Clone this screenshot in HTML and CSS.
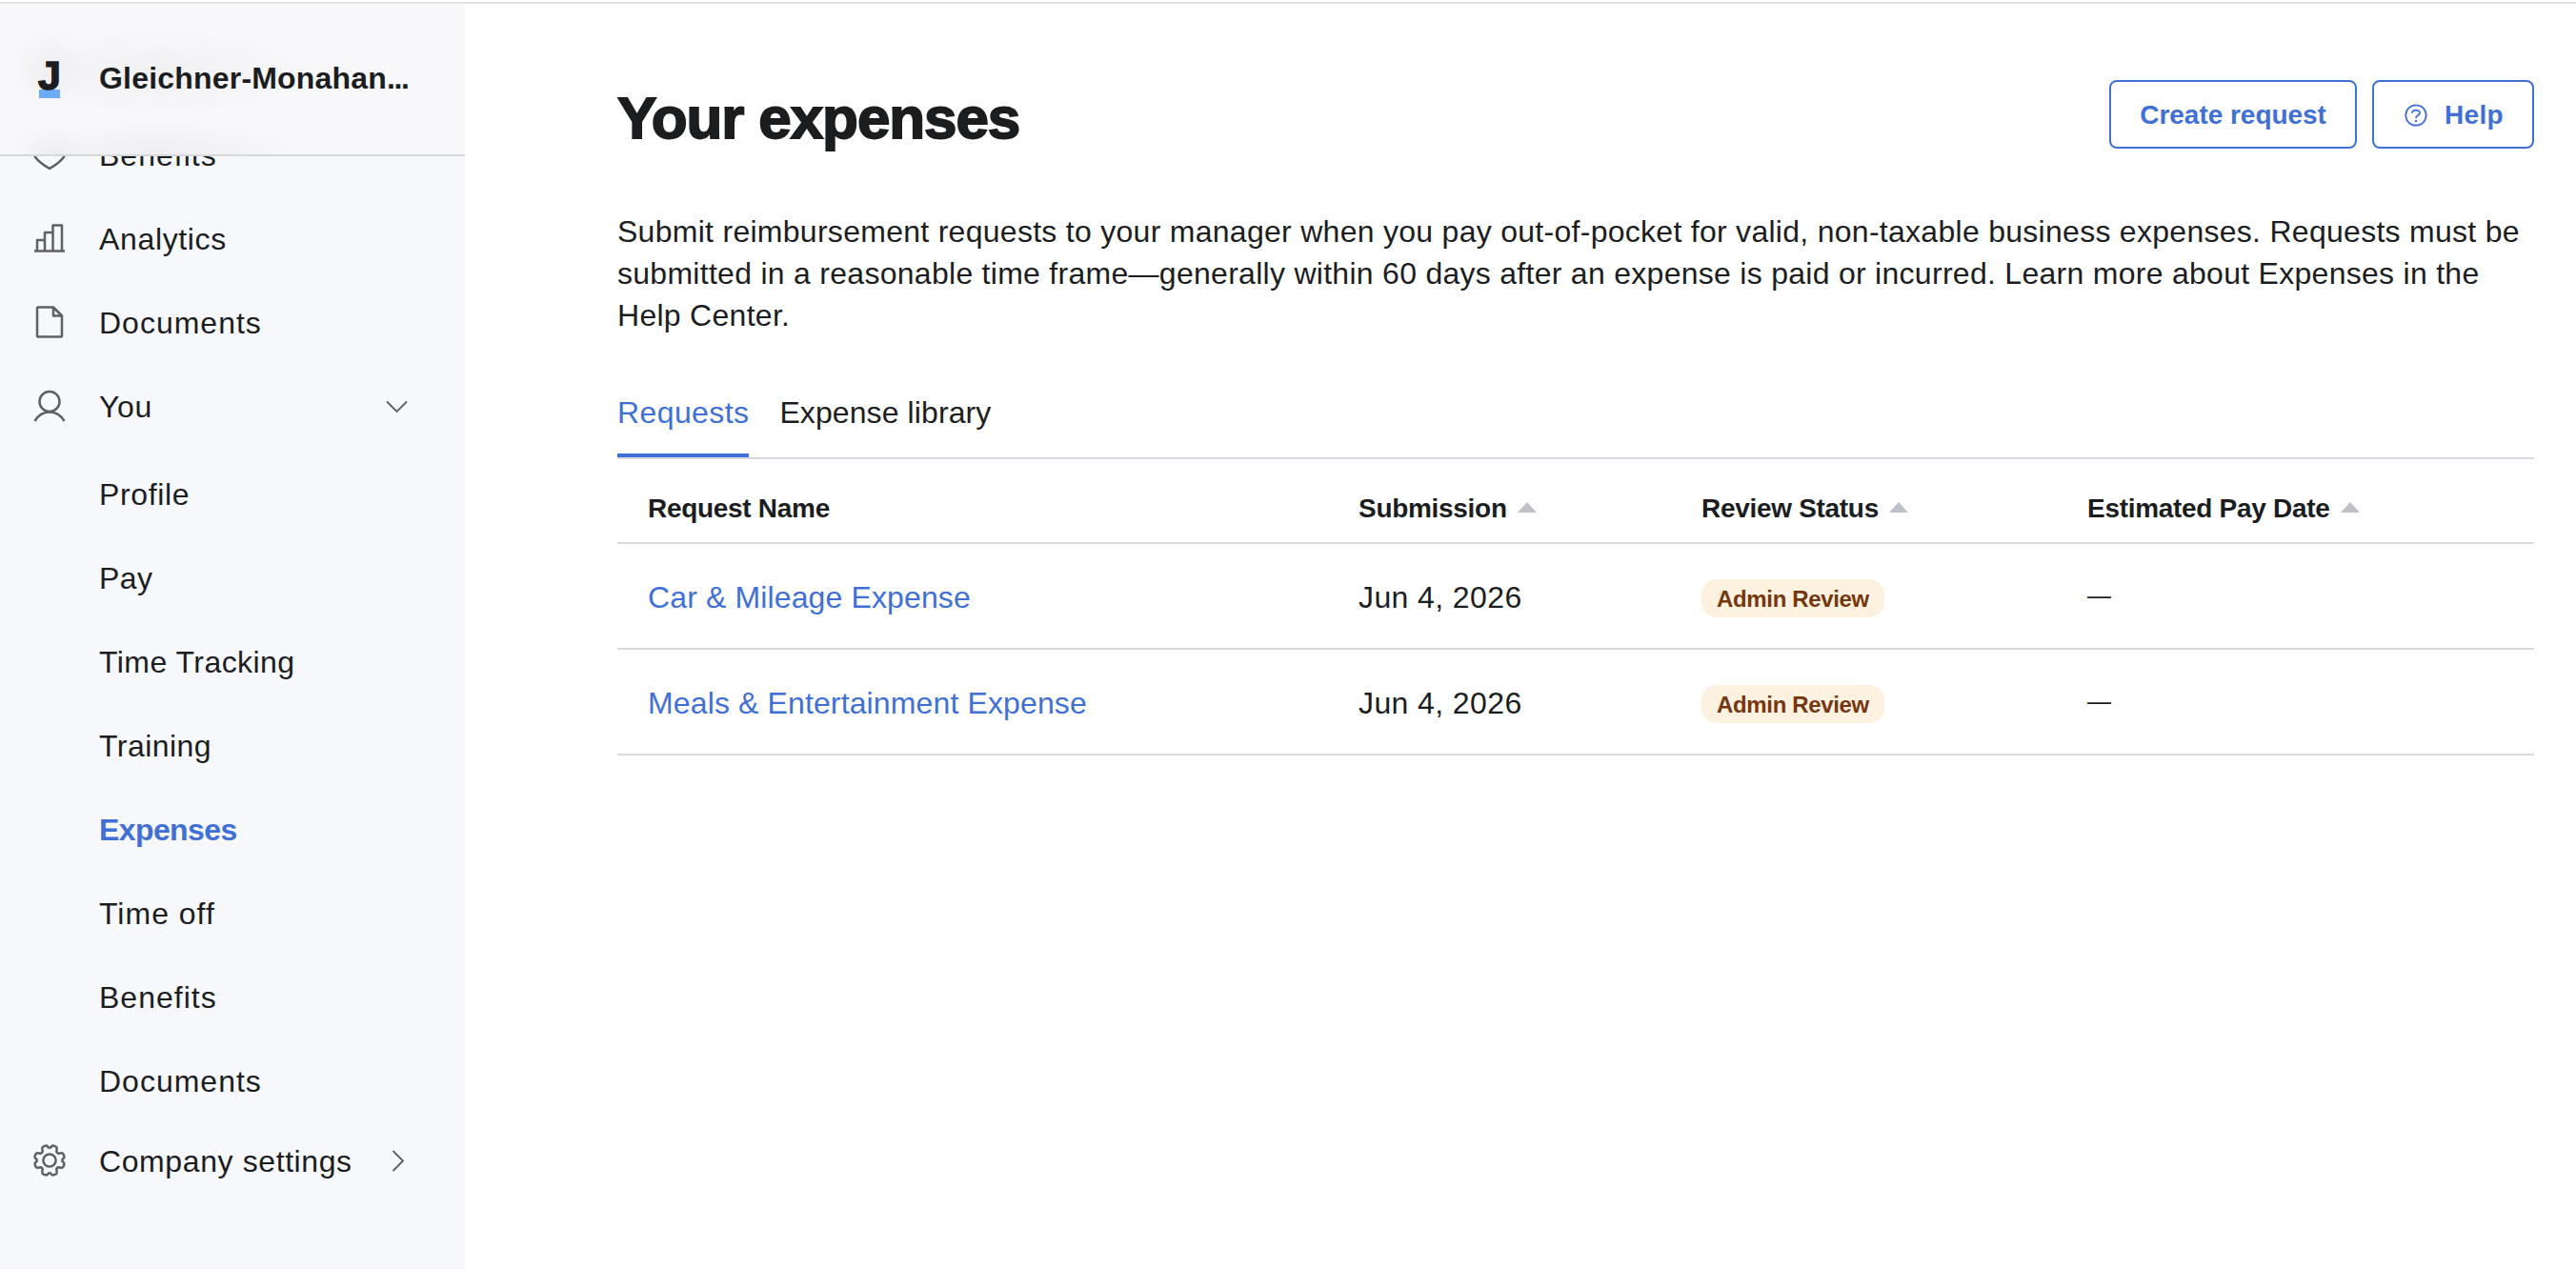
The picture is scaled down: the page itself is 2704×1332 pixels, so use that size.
FILE: index.html
```html
<!DOCTYPE html>
<html lang="en">
<head>
<meta charset="utf-8">
<title>Your expenses</title>
<link rel="stylesheet" href="styles.css">
</head>
<body>
<div class="app">
  <aside class="sidebar">
    <header class="company">
      <span class="logo">J</span>
      <span class="company-name">Gleichner-Monahan<span class="dots">...</span></span>
    </header>
    <nav class="nav">
      <a class="item first">
        <svg class="icon" viewBox="0 0 36 36"><path d="M18 33C12 29.500 6 25.500 2.500 20C-1 12 4 5 10 5C14 5 17 8 18 10C19 8 22 5 26 5C32 5 37 12 33.500 20C30 25.500 24 29.500 18 33Z"/></svg>
        <span>Benefits</span>
      </a>
      <a class="item">
        <svg class="icon" viewBox="0 0 36 36"><path d="M2 31.500H34M5 31V20H13M13 31V12H21.500M21.500 31V4.500H31V31"/></svg>
        <span>Analytics</span>
      </a>
      <a class="item wide">
        <svg class="icon" viewBox="0 0 36 36"><path d="M6 2.500H22L31 11.500V32.500A1 1 0 0 1 30 33.500H6A1 1 0 0 1 5 32.500V3.500A1 1 0 0 1 6 2.500ZM22 2.500V11.500H31"/></svg>
        <span>Documents</span>
      </a>
      <a class="item">
        <svg class="icon" viewBox="0 0 36 36"><circle cx="18" cy="13.500" r="10.500"/><path d="M2.500 34C6 28 11.500 24.500 18 24.500S30 28 33.500 34"/></svg>
        <span>You</span>
        <svg class="chevron" viewBox="0 0 24 24"><path d="M0 6.500L10.500 17L21 6.500"/></svg>
      </a>
      <div class="subnav">
        <a class="item">Profile</a>
        <a class="item tight">Pay</a>
        <a class="item tight">Time Tracking</a>
        <a class="item tight">Training</a>
        <a class="item active">Expenses</a>
        <a class="item wide">Time off</a>
        <a class="item wide">Benefits</a>
        <a class="item wide">Documents</a>
      </div>
      <a class="item settings">
        <svg class="icon" viewBox="0 0 36 36">
          <defs><path id="cog" d="M18 5.200Q19.500 4.200 20.200 3.200Q21 2.300 22.200 2.600L24.700 3.600Q26 4.200 25.700 5.800L25.300 8.500Q25.500 10.500 27.500 10.700L30.200 10.300Q31.800 10 32.400 11.300L33.400 13.800Q33.700 15 32.800 15.800Q31.800 16.500 30.800 18"/></defs>
          <circle cx="18" cy="18" r="6.600"/>
          <use href="#cog"/>
          <use href="#cog" transform="rotate(90 18 18)"/>
          <use href="#cog" transform="rotate(180 18 18)"/>
          <use href="#cog" transform="rotate(270 18 18)"/>
        </svg>
        <span>Company settings</span>
        <svg class="chevron" viewBox="0 0 24 24"><path d="M6.500 1L17 11.500L6.500 22"/></svg>
      </a>
    </nav>
  </aside>
  <main class="main">
    <header class="page-header">
      <h1>Your expenses</h1>
      <div class="actions">
        <button class="button">Create request</button>
        <button class="button help">
          <svg class="help-icon" viewBox="0 0 28 28"><circle cx="14" cy="14" r="10.700"/><path d="M10 11.800C10 7.500 18 7.500 18 11.500C18 14.200 14 13.800 14 17"/><circle class="dot" cx="14" cy="20" r="1.200"/></svg>
          <span>Help</span>
        </button>
      </div>
    </header>
    <p class="intro">Submit reimbursement requests to your manager when you pay out-of-pocket for valid, non-taxable business expenses. Requests must be submitted in a reasonable time frame—generally within 60 days after an expense is paid or incurred. Learn more about Expenses in the Help Center.</p>
    <div class="tabs">
      <a class="tab selected">Requests</a>
      <a class="tab">Expense library</a>
    </div>
    <div class="table">
      <div class="row head">
        <span>Request Name</span>
        <span>Submission<svg class="sort" viewBox="0 0 20 11"><path d="M10 0L20 11H0Z"/></svg></span>
        <span>Review Status<svg class="sort" viewBox="0 0 20 11"><path d="M10 0L20 11H0Z"/></svg></span>
        <span>Estimated Pay Date<svg class="sort" viewBox="0 0 20 11"><path d="M10 0L20 11H0Z"/></svg></span>
      </div>
      <div class="row">
        <a class="link">Car &amp; Mileage Expense</a>
        <span class="date">Jun 4, 2026</span>
        <span><span class="badge">Admin Review</span></span>
        <span class="dash">—</span>
      </div>
      <div class="row">
        <a class="link">Meals &amp; Entertainment Expense</a>
        <span class="date">Jun 4, 2026</span>
        <span><span class="badge">Admin Review</span></span>
        <span class="dash">—</span>
      </div>
    </div>
  </main>
</div>
</body>
</html>
```
FILE: styles.css
```css
* { box-sizing: border-box; }

body {
  margin: 0;
  background: #fff;
  color: #1c1d1f;
  font: 32px/44px "Liberation Sans", Arial, sans-serif;
}

.app {
  display: flex;
  height: 1332px;
  border-top: 2px solid #fff;
  overflow: hidden;
}

.app::before {
  content: "";
  position: absolute;
  top: 2px;
  left: 0;
  width: 100%;
  height: 2px;
  background: #e0e0e2;
}

/* Sidebar */
.sidebar {
  width: 488px;
  flex: none;
  padding-top: 2px;
  background: #f7f8fc;
}

.company {
  display: flex;
  align-items: center;
  gap: 41px;
  height: 160px;
  padding: 0 0 3px 41px;
  border-bottom: 2px solid #d7d8dc;
  background:
    radial-gradient(ellipse 40px 44px at 52px 68px, rgba(60, 60, 60, .04), transparent),
    radial-gradient(ellipse 160px 46px at 168px 72px, rgba(60, 60, 60, .04), transparent),
    radial-gradient(ellipse 40px 36px at 52px 160px, rgba(60, 60, 60, .04), transparent),
    radial-gradient(ellipse 150px 40px at 166px 160px, rgba(60, 60, 60, .05), transparent),
    #f8f8fa;
}

.logo {
  width: 22px;
  height: 40px;
  margin-top: 2px;
  border-bottom: 9px solid #6aabfb;
  font-size: 43px;
  font-weight: 700;
  line-height: 32px;
  text-indent: -1px;
  -webkit-text-stroke: 1.500px #1c1d1f;
}

.company-name { font-weight: 700; letter-spacing: .2px; }
.dots { letter-spacing: -1.500px; }

.nav { display: flex; flex-direction: column; }

.item {
  display: flex;
  align-items: center;
  gap: 34px;
  height: 88px;
  padding: 0 58px 0 34px;
  letter-spacing: .65px;
}

.item.wide { letter-spacing: 1px; }
.item.tight { letter-spacing: .45px; }

.item.first {
  height: 43px;
  overflow: hidden;
  align-items: flex-end;
}
.item.first span { margin-bottom: 22px; letter-spacing: 1px; }
.item.first .icon { margin-bottom: 27px; }

.icon {
  width: 36px;
  height: 36px;
  margin-bottom: 3px;
  fill: none;
  stroke: #5f6064;
  stroke-width: 2.500;
  stroke-linejoin: round;
}

.chevron {
  width: 24px;
  height: 24px;
  margin-left: auto;
  fill: none;
  stroke: #5f6064;
  stroke-width: 1.900;
  overflow: visible;
}

.subnav { padding-top: 4px; }
.subnav .item { padding-left: 104px; }
.subnav .item.active { color: #4070d6; font-weight: 700; letter-spacing: -.6px; }
.item.settings { height: 80px; letter-spacing: .6px; }

/* Page */
.main {
  flex: 1;
  padding: 82px 44px 0 160px;
}

.page-header {
  display: flex;
  justify-content: space-between;
  height: 137px;
}

h1 {
  margin: 4px 0 0;
  font-size: 62px;
  line-height: 72px;
  letter-spacing: -1.100px;
  -webkit-text-stroke: 1.800px #1c1d1f;
}

.actions { display: flex; gap: 16px; }

.button {
  display: flex;
  align-items: center;
  gap: 16px;
  height: 72px;
  padding: 1px 30px 0;
  border: 2px solid #4070d6;
  border-radius: 8px;
  background: #fff;
  color: #4070d6;
  font: 700 28px "Liberation Sans", Arial, sans-serif;
  letter-spacing: -.03px;
}

.button.help { letter-spacing: .35px; }

.help-icon {
  width: 28px;
  height: 28px;
  fill: none;
  stroke: #4070d6;
  stroke-width: 1.800;
}
.help-icon .dot { fill: #4070d6; stroke: none; }

.intro {
  margin: 0;
  letter-spacing: .28px;
}

.tabs {
  display: flex;
  gap: 32px;
  margin-top: 57px;
  border-bottom: 2px solid #d9dae0;
}

.tab { height: 70px; padding-top: 1px; letter-spacing: .1px; }
.tab.selected { border-bottom: 4px solid #4070d6; color: #4070d6; letter-spacing: .4px; }

.row {
  display: grid;
  grid-template-columns: 746px 360px 405px 1fr;
  align-items: center;
  height: 111px;
  padding: 2px 0 0 32px;
  border-bottom: 2px solid #d9dae0;
}

.row.head {
  height: 89px;
  padding-top: 16px;
  font-size: 28px;
  font-weight: 700;
  letter-spacing: -.3px;
}

.sort {
  width: 20px;
  height: 11px;
  margin-left: 11px;
  vertical-align: 5px;
  fill: #bfc1c9;
}

.link { color: #4070d6; letter-spacing: .13px; }
.date { letter-spacing: .4px; }

.badge {
  display: block;
  width: 192px;
  height: 40px;
  margin-top: 3px;
  border-radius: 16px;
  background: #fdf2df;
  color: #743711;
  font-size: 24px;
  font-weight: 700;
  line-height: 41px;
  text-align: center;
  letter-spacing: -.35px;
}

.dash { padding-bottom: 3px; font-size: 25px; }
```
